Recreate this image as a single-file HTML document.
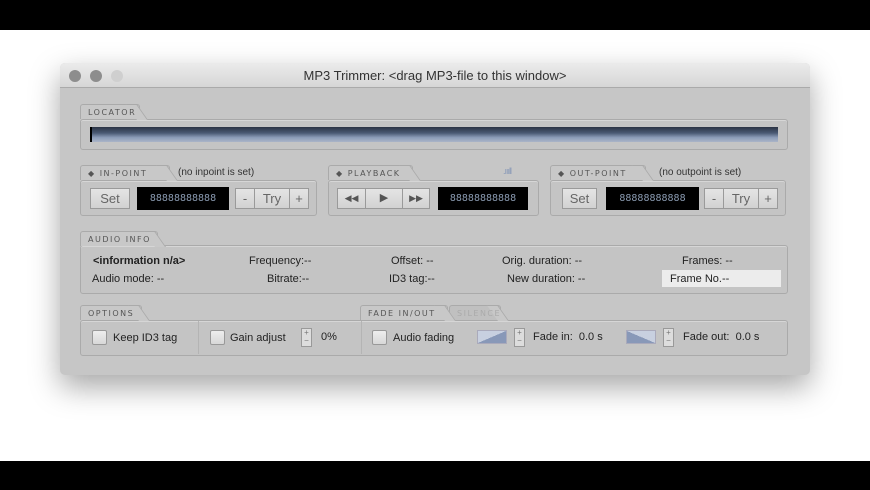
<!DOCTYPE html>
<html><head><style>
*{margin:0;padding:0;box-sizing:border-box}
body{width:870px;height:490px;background:#fff;position:relative;overflow:hidden;font-family:"Liberation Sans",sans-serif;font-size:11px;color:#222}
.bar{position:absolute;left:0;width:870px;background:#000}
.win{position:absolute;left:60px;top:63px;width:750px;height:312px;background:#c6c6c6;border-radius:5px;box-shadow:0 12px 30px rgba(0,0,0,.35);overflow:hidden}
.title{position:absolute;left:0;top:0;width:750px;height:25px;background:linear-gradient(#ebebeb,#d6d6d6);border-bottom:1px solid #aaa;text-align:center;line-height:26px;font-size:13px;color:#333}
.dot{position:absolute;top:7px;width:12px;height:12px;border-radius:50%;background:#8d8d8d}
.a{position:absolute}
.box{position:absolute;border:1px solid #aaa;border-radius:3px;background:#c4c4c4;box-shadow:inset 0 1px 0 #d6d6d6}
.tab{position:absolute;z-index:1;height:15px;border:1px solid #aaa;border-bottom:none;border-radius:3px 3px 0 0;background:#c8c8c8;font-size:8px;letter-spacing:1.5px;color:#555;padding:3px 0 0 7px;font-family:"DejaVu Sans",sans-serif;white-space:nowrap}
.tab:after{content:"";position:absolute;z-index:-1;right:-9px;top:-1px;width:10px;height:15px;border-top:1px solid #aaa;border-right:1px solid #aaa;transform:skewX(35deg);transform-origin:bottom left;background:#c8c8c8}
.btn{position:absolute;height:21px;border:1px solid #9a9a9a;background:linear-gradient(#e4e4e4,#d2d2d2);color:#666;font-size:13px;text-align:center;line-height:19px}
.lcd{position:absolute;height:23px;background:#000;color:#8a9ab0;font-family:"DejaVu Sans Mono",monospace;font-size:10px;line-height:23px;text-align:center}
.chk{position:absolute;width:15px;height:15px;border:1px solid #999;background:linear-gradient(#eee,#d8d8d8);border-radius:2px}
.t{position:absolute;font-size:11px;color:#222;white-space:nowrap}
.note{position:absolute;font-size:10px;color:#333}
.sp{position:absolute;width:11px;height:19px;border:1px solid #999;background:#ddd;font-size:8px;line-height:8px;text-align:center;color:#777}
</style></head><body>
<div class="bar" style="top:0;height:30px"></div>
<div class="bar" style="top:461px;height:29px"></div>
<div class="win">
 <div class="title">MP3 Trimmer: &lt;drag MP3-file to this window&gt;</div>
 <div class="dot" style="left:9px"></div><div class="dot" style="left:30px"></div><div class="dot" style="left:51px;background:#cfcfcf"></div>
</div>
<div class="box" style="left:80px;top:119px;width:708px;height:31px"></div>
<div class="tab" style="left:80px;top:104px;width:60px">LOCATOR</div>
<div class="a" style="left:90px;top:127px;width:688px;height:15px;background:linear-gradient(#2a3344,#4a5a74 40%,#8c9cb8 70%,#aab4c8);border-left:2px solid #000"></div>
<div class="box" style="left:80px;top:180px;width:237px;height:36px"></div>
<div class="tab" style="left:80px;top:165px;width:90px">◆ IN-POINT</div>
<div class="note" style="left:178px;top:167px">(no inpoint is set)</div>
<div class="btn" style="left:90px;top:188px;width:40px">Set</div>
<div class="lcd" style="left:137px;top:187px;width:92px">88888888888</div>
<div class="btn" style="left:235px;top:188px;width:20px">-</div>
<div class="btn" style="left:254px;top:188px;width:36px">Try</div>
<div class="btn" style="left:289px;top:188px;width:20px">+</div>
<div class="box" style="left:328px;top:180px;width:211px;height:36px"></div>
<div class="tab" style="left:328px;top:165px;width:85px">◆ PLAYBACK</div>
<div class="note" style="left:503px;top:166px;color:#8a9ab8;font-size:9px;letter-spacing:-1px">.ıııll</div>
<div class="btn" style="left:337px;top:188px;width:29px;font-size:9px;color:#555">◀◀</div>
<div class="btn" style="left:365px;top:188px;width:38px;font-size:11px;color:#555">▶</div>
<div class="btn" style="left:402px;top:188px;width:28px;font-size:9px;color:#555">▶▶</div>
<div class="lcd" style="left:438px;top:187px;width:90px">88888888888</div>
<div class="box" style="left:550px;top:180px;width:236px;height:36px"></div>
<div class="tab" style="left:550px;top:165px;width:96px">◆ OUT-POINT</div>
<div class="note" style="left:659px;top:167px">(no outpoint is set)</div>
<div class="btn" style="left:562px;top:188px;width:35px">Set</div>
<div class="lcd" style="left:606px;top:187px;width:93px">88888888888</div>
<div class="btn" style="left:704px;top:188px;width:20px">-</div>
<div class="btn" style="left:723px;top:188px;width:36px">Try</div>
<div class="btn" style="left:758px;top:188px;width:20px">+</div>
<div class="box" style="left:80px;top:245px;width:708px;height:49px"></div>
<div class="tab" style="left:80px;top:231px;width:78px">AUDIO INFO</div>
<div class="t" style="left:93px;top:255px;font-weight:bold">&lt;information n/a&gt;</div>
<div class="t" style="left:92px;top:273px">Audio mode: --</div>
<div class="t" style="left:249px;top:255px">Frequency:--</div>
<div class="t" style="left:267px;top:273px">Bitrate:--</div>
<div class="t" style="left:391px;top:255px">Offset: --</div>
<div class="t" style="left:389px;top:273px">ID3 tag:--</div>
<div class="t" style="left:502px;top:255px">Orig. duration: --</div>
<div class="t" style="left:507px;top:273px">New duration: --</div>
<div class="t" style="left:682px;top:255px">Frames: --</div>
<div class="a" style="left:662px;top:270px;width:119px;height:17px;background:#ececec"></div>
<div class="t" style="left:670px;top:273px">Frame No.--</div>
<div class="box" style="left:80px;top:320px;width:708px;height:36px"></div>
<div class="tab" style="left:80px;top:305px;width:62px">OPTIONS</div>
<div class="tab" style="left:449px;top:305px;width:52px;color:#aaa;background:#c0c0c0">SILENCE</div>
<div class="tab" style="left:360px;top:305px;width:88px;z-index:2">FADE IN/OUT</div>
<div class="a" style="left:198px;top:321px;width:1px;height:33px;background:#b4b4b4"></div>
<div class="a" style="left:361px;top:321px;width:1px;height:33px;background:#b4b4b4"></div>
<div class="chk" style="left:92px;top:330px"></div><div class="t" style="left:113px;top:332px">Keep ID3 tag</div>
<div class="chk" style="left:210px;top:330px"></div><div class="t" style="left:230px;top:332px">Gain adjust</div>
<div class="sp" style="left:301px;top:328px">+<br>−</div><div class="t" style="left:321px;top:331px">0%</div>
<div class="chk" style="left:372px;top:330px"></div><div class="t" style="left:393px;top:332px">Audio fading</div>
<div class="a" style="left:477px;top:330px;width:30px;height:14px;background:linear-gradient(to top left,#8898b8 50%,#c8d0e0 50%);border:1px solid #aab"></div>
<div class="sp" style="left:514px;top:328px">+<br>−</div><div class="t" style="left:533px;top:331px">Fade in:&nbsp; 0.0 s</div>
<div class="a" style="left:626px;top:330px;width:30px;height:14px;background:linear-gradient(to bottom left,#c8d0e0 50%,#8898b8 50%);border:1px solid #aab"></div>
<div class="sp" style="left:663px;top:328px">+<br>−</div><div class="t" style="left:683px;top:331px">Fade out:&nbsp; 0.0 s</div>
</body></html>
